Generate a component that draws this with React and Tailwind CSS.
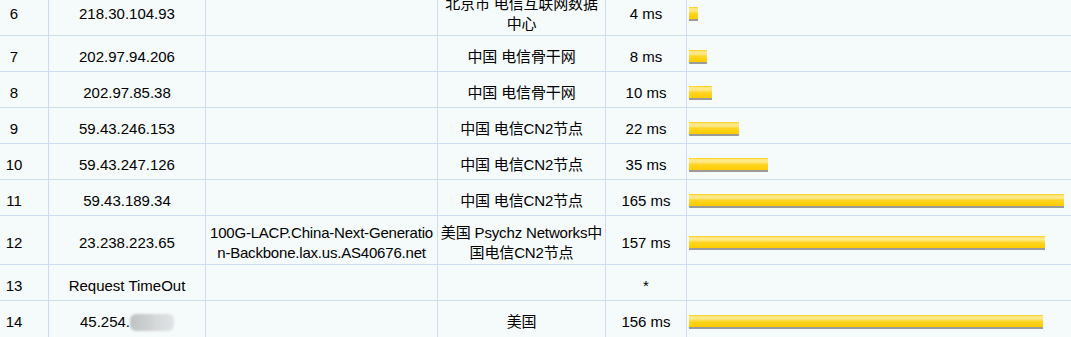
import React from "react";

// traceroute hops, tail of the table
const hops = [
  { no: 6, ip: "218.30.104.93", host: "", loc: ["北京市 电信互联网数据", "中心"], ms: 4, tall: true },
  { no: 7, ip: "202.97.94.206", host: "", loc: ["中国 电信骨干网"], ms: 8 },
  { no: 8, ip: "202.97.85.38", host: "", loc: ["中国 电信骨干网"], ms: 10 },
  { no: 9, ip: "59.43.246.153", host: "", loc: ["中国 电信CN2节点"], ms: 22 },
  { no: 10, ip: "59.43.247.126", host: "", loc: ["中国 电信CN2节点"], ms: 35 },
  { no: 11, ip: "59.43.189.34", host: "", loc: ["中国 电信CN2节点"], ms: 165 },
  {
    no: 12,
    ip: "23.238.223.65",
    host: ["100G-LACP.China-Next-Generatio", "n-Backbone.lax.us.AS40676.net"],
    loc: ["美国 Psychz Networks中", "国电信CN2节点"],
    ms: 157,
    tall: true,
  },
  { no: 13, ip: "Request TimeOut", host: "", loc: [""], ms: null },
  { no: 14, ip: "45.254.", blur: true, host: "", loc: ["美国"], ms: 156, last: true },
];

const cell = "flex items-center justify-center pt-[6px] border-r border-[#cfdbee] leading-[20px] text-center";

const Lines = ({ lines }) =>
  Array.isArray(lines) ? (
    <div className="flex flex-col items-center">
      {lines.map((l, i) => (
        <span key={i} className="whitespace-nowrap">{l}</span>
      ))}
    </div>
  ) : (
    <span className="whitespace-nowrap">{lines}</span>
  );

const Bar = ({ ms }) => (
  <div
    className="h-[14px] border-b-2 border-[#9b9b9b] bg-[linear-gradient(to_bottom,#f7c90f_0%,#ffe57a_12%,#ffea8f_30%,#ffd422_55%,#ffcc00_100%)]"
    style={{ width: Math.round(ms * 2.27) }}
  />
);

export default function App() {
  return (
    <div
      className="w-[1071px] h-[337px] overflow-hidden bg-[#f5fafa] text-[15px] text-black"
      style={{ fontFamily: '"Liberation Sans", "Noto Sans CJK SC", sans-serif' }}
    >
      <div className="-mt-[13px]">
        {hops.map((h) => (
          <div
            key={h.no}
            className={`grid grid-cols-[49px_157px_232px_168px_81px_1fr] ${h.last ? "" : "border-b"} border-[#cfdbee] ${
              h.tall ? "h-[49px]" : "h-[36px]"
            }`}
          >
            <div className={`${cell} !justify-start`}>
              <span className="w-[28px] text-center">{h.no}</span>
            </div>
            <div className={cell}>
              <span className="whitespace-nowrap flex items-center">
                {h.ip}
                {h.blur && (
                  <span className="inline-block w-[44px] h-[17px] rounded-[6px] blur-[1px] bg-[linear-gradient(to_right,#bfc3c3,#cfd2d2_45%,#d7d9da_60%,#e0e3e6)]" />
                )}
              </span>
            </div>
            <div className={`${cell} tracking-[-0.2px]`}>
              <Lines lines={h.host} />
            </div>
            <div className={`${cell} tracking-[-0.15px]`}>
              <Lines lines={h.loc} />
            </div>
            <div className={cell}>{h.ms === null ? "*" : `${h.ms} ms`}</div>
            <div className="flex items-center pl-[2px] pt-[6px]">{h.ms !== null && <Bar ms={h.ms} />}</div>
          </div>
        ))}
      </div>
    </div>
  );
}
